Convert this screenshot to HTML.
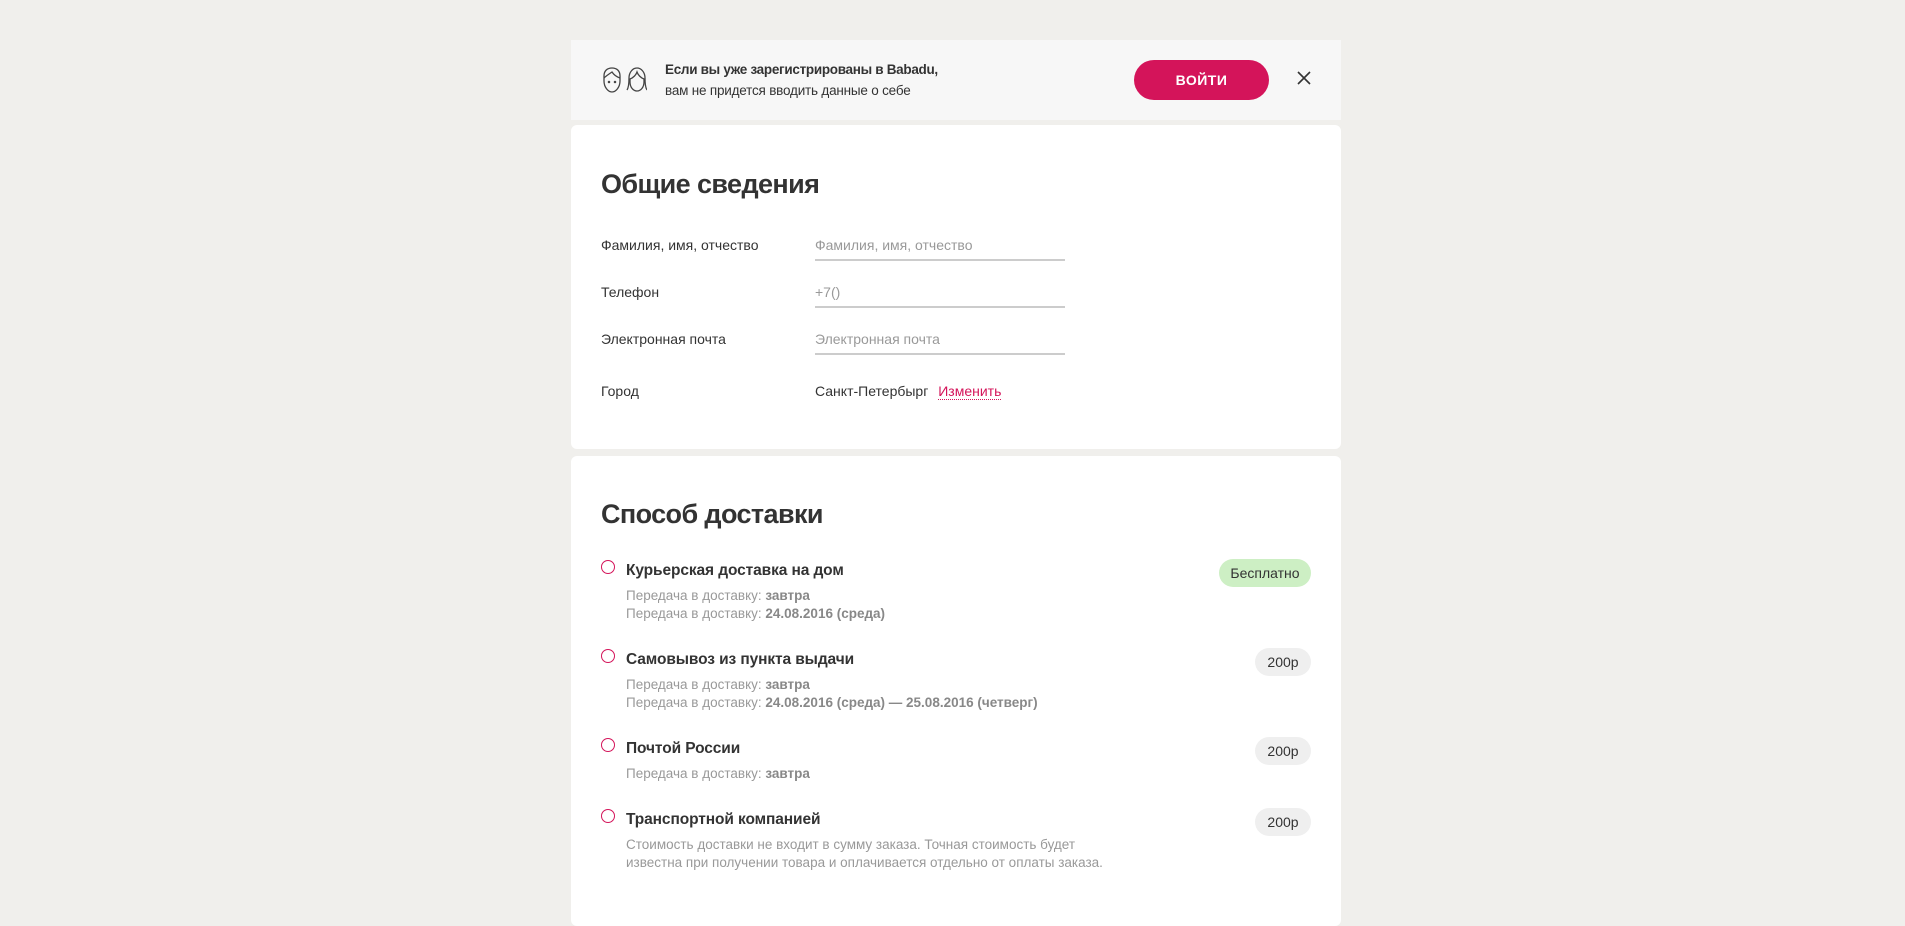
<!DOCTYPE html>
<html><head><meta charset="utf-8"><style>
*{box-sizing:border-box;margin:0;padding:0}
body{width:1905px;height:912px;overflow:hidden;background:#f0efec;font-family:"Liberation Sans","Noto Sans CJK SC",sans-serif;color:#333;position:relative}
.abs{position:absolute}
.banner{left:571px;top:40px;width:770px;height:80px;background:#f7f7f7}
.card{background:#fff;border-radius:6px;left:571px;width:770px}
.lbl{font-size:14px;color:#333;left:601px;line-height:18px}
.inp{left:815px;width:250px;height:2px;background:#ccc}
.ph{left:815px;font-size:14px;color:#999;line-height:18px}
h2{position:absolute;left:601px;font-size:27px;font-weight:bold;color:#333;letter-spacing:-0.6px}
.radio{left:601px;width:14px;height:14px;border:1.5px solid #d4145a;border-radius:50%}
.tt{left:626px;font-size:15.5px;font-weight:bold;color:#333;line-height:20px;letter-spacing:-0.1px}
.sub{left:626px;font-size:13.5px;color:#999;line-height:18px}
.sub b{color:#888}
.badge{height:28px;border-radius:14px;background:#efefef;font-size:14px;line-height:28px;text-align:center;color:#333}
</style></head><body>
<div class="abs banner"></div>
<svg class="abs" style="left:601px;top:66px" width="46" height="28" viewBox="0 0 46 28" fill="none" stroke="#444" stroke-width="1.3">
<path d="M3 10c0-5 3-8 8-8s8 3 8 8v5c0 6-4 11-8 11s-8-5-8-11z"/><path d="M3 12c2-2 5-4 8-6 2 3 5 5 8 6"/>
<circle cx="8" cy="16" r=".6" fill="#444"/><circle cx="14" cy="16" r=".6" fill="#444"/>
<path d="M26 24c2-3 2-8 2-12 0-6 4-10 8-10s8 4 8 10c0 4 0 9 2 12"/><path d="M29 13c3-1 6-4 7-7 1 3 4 6 7 7v3c0 5-3 9-7 9s-7-4-7-9z"/>
</svg>
<div class="abs" style="left:665px;top:60px;font-size:13.5px;font-weight:bold;line-height:20px;letter-spacing:-0.3px">Если вы уже зарегистрированы в Babadu,</div>
<div class="abs" style="left:665px;top:81px;font-size:13.5px;line-height:20px;letter-spacing:-0.2px">вам не придется вводить данные о себе</div>
<div class="abs" style="left:1134px;top:60px;width:135px;height:40px;border-radius:20px;background:#d4145a;color:#fff;font-weight:bold;font-size:14px;line-height:40px;text-align:center;letter-spacing:.5px">ВОЙТИ</div>
<svg class="abs" style="left:1297px;top:71px" width="14" height="14" viewBox="0 0 14 14" stroke="#333" stroke-width="1.6"><path d="M1 1L13 13M13 1L1 13"/></svg>

<div class="abs card" style="top:125px;height:324px"></div>
<h2 style="top:169px">Общие сведения</h2>
<div class="abs lbl" style="top:236px">Фамилия, имя, отчество</div>
<div class="abs ph" style="top:236px">Фамилия, имя, отчество</div>
<div class="abs inp" style="top:259px"></div>
<div class="abs lbl" style="top:283px">Телефон</div>
<div class="abs ph" style="top:283px">+7()</div>
<div class="abs inp" style="top:306px"></div>
<div class="abs lbl" style="top:330px">Электронная почта</div>
<div class="abs ph" style="top:330px">Электронная почта</div>
<div class="abs inp" style="top:353px"></div>
<div class="abs lbl" style="top:382px">Город</div>
<div class="abs" style="left:815px;top:382px;font-size:14px;line-height:18px">Санкт-Петербырг <span style="color:#d4145a;border-bottom:1px dotted #d4145a;margin-left:6px">Изменить</span></div>

<div class="abs card" style="top:456px;height:470px"></div>
<h2 style="top:499px">Способ доставки</h2>

<div class="abs radio" style="top:560px"></div>
<div class="abs tt" style="top:561px">Курьерская доставка на дом</div>
<div class="abs sub" style="top:587px">Передача в доставку: <b>завтра</b></div>
<div class="abs sub" style="top:605px">Передача в доставку: <b>24.08.2016 (среда)</b></div>
<div class="abs badge" style="left:1219px;top:559px;width:92px;background:#cdefc4">Бесплатно</div>

<div class="abs radio" style="top:649px"></div>
<div class="abs tt" style="top:650px">Самовывоз из пункта выдачи</div>
<div class="abs sub" style="top:676px">Передача в доставку: <b>завтра</b></div>
<div class="abs sub" style="top:694px">Передача в доставку: <b>24.08.2016 (среда) — 25.08.2016 (четверг)</b></div>
<div class="abs badge" style="left:1255px;top:648px;width:56px">200р</div>

<div class="abs radio" style="top:738px"></div>
<div class="abs tt" style="top:739px">Почтой России</div>
<div class="abs sub" style="top:765px">Передача в доставку: <b>завтра</b></div>
<div class="abs badge" style="left:1255px;top:737px;width:56px">200р</div>

<div class="abs radio" style="top:809px"></div>
<div class="abs tt" style="top:810px">Транспортной компанией</div>
<div class="abs sub" style="top:836px">Стоимость доставки не входит в сумму заказа. Точная стоимость будет</div>
<div class="abs sub" style="top:854px">известна при получении товара и оплачивается отдельно от оплаты заказа.</div>
<div class="abs badge" style="left:1255px;top:808px;width:56px">200р</div>
</body></html>
